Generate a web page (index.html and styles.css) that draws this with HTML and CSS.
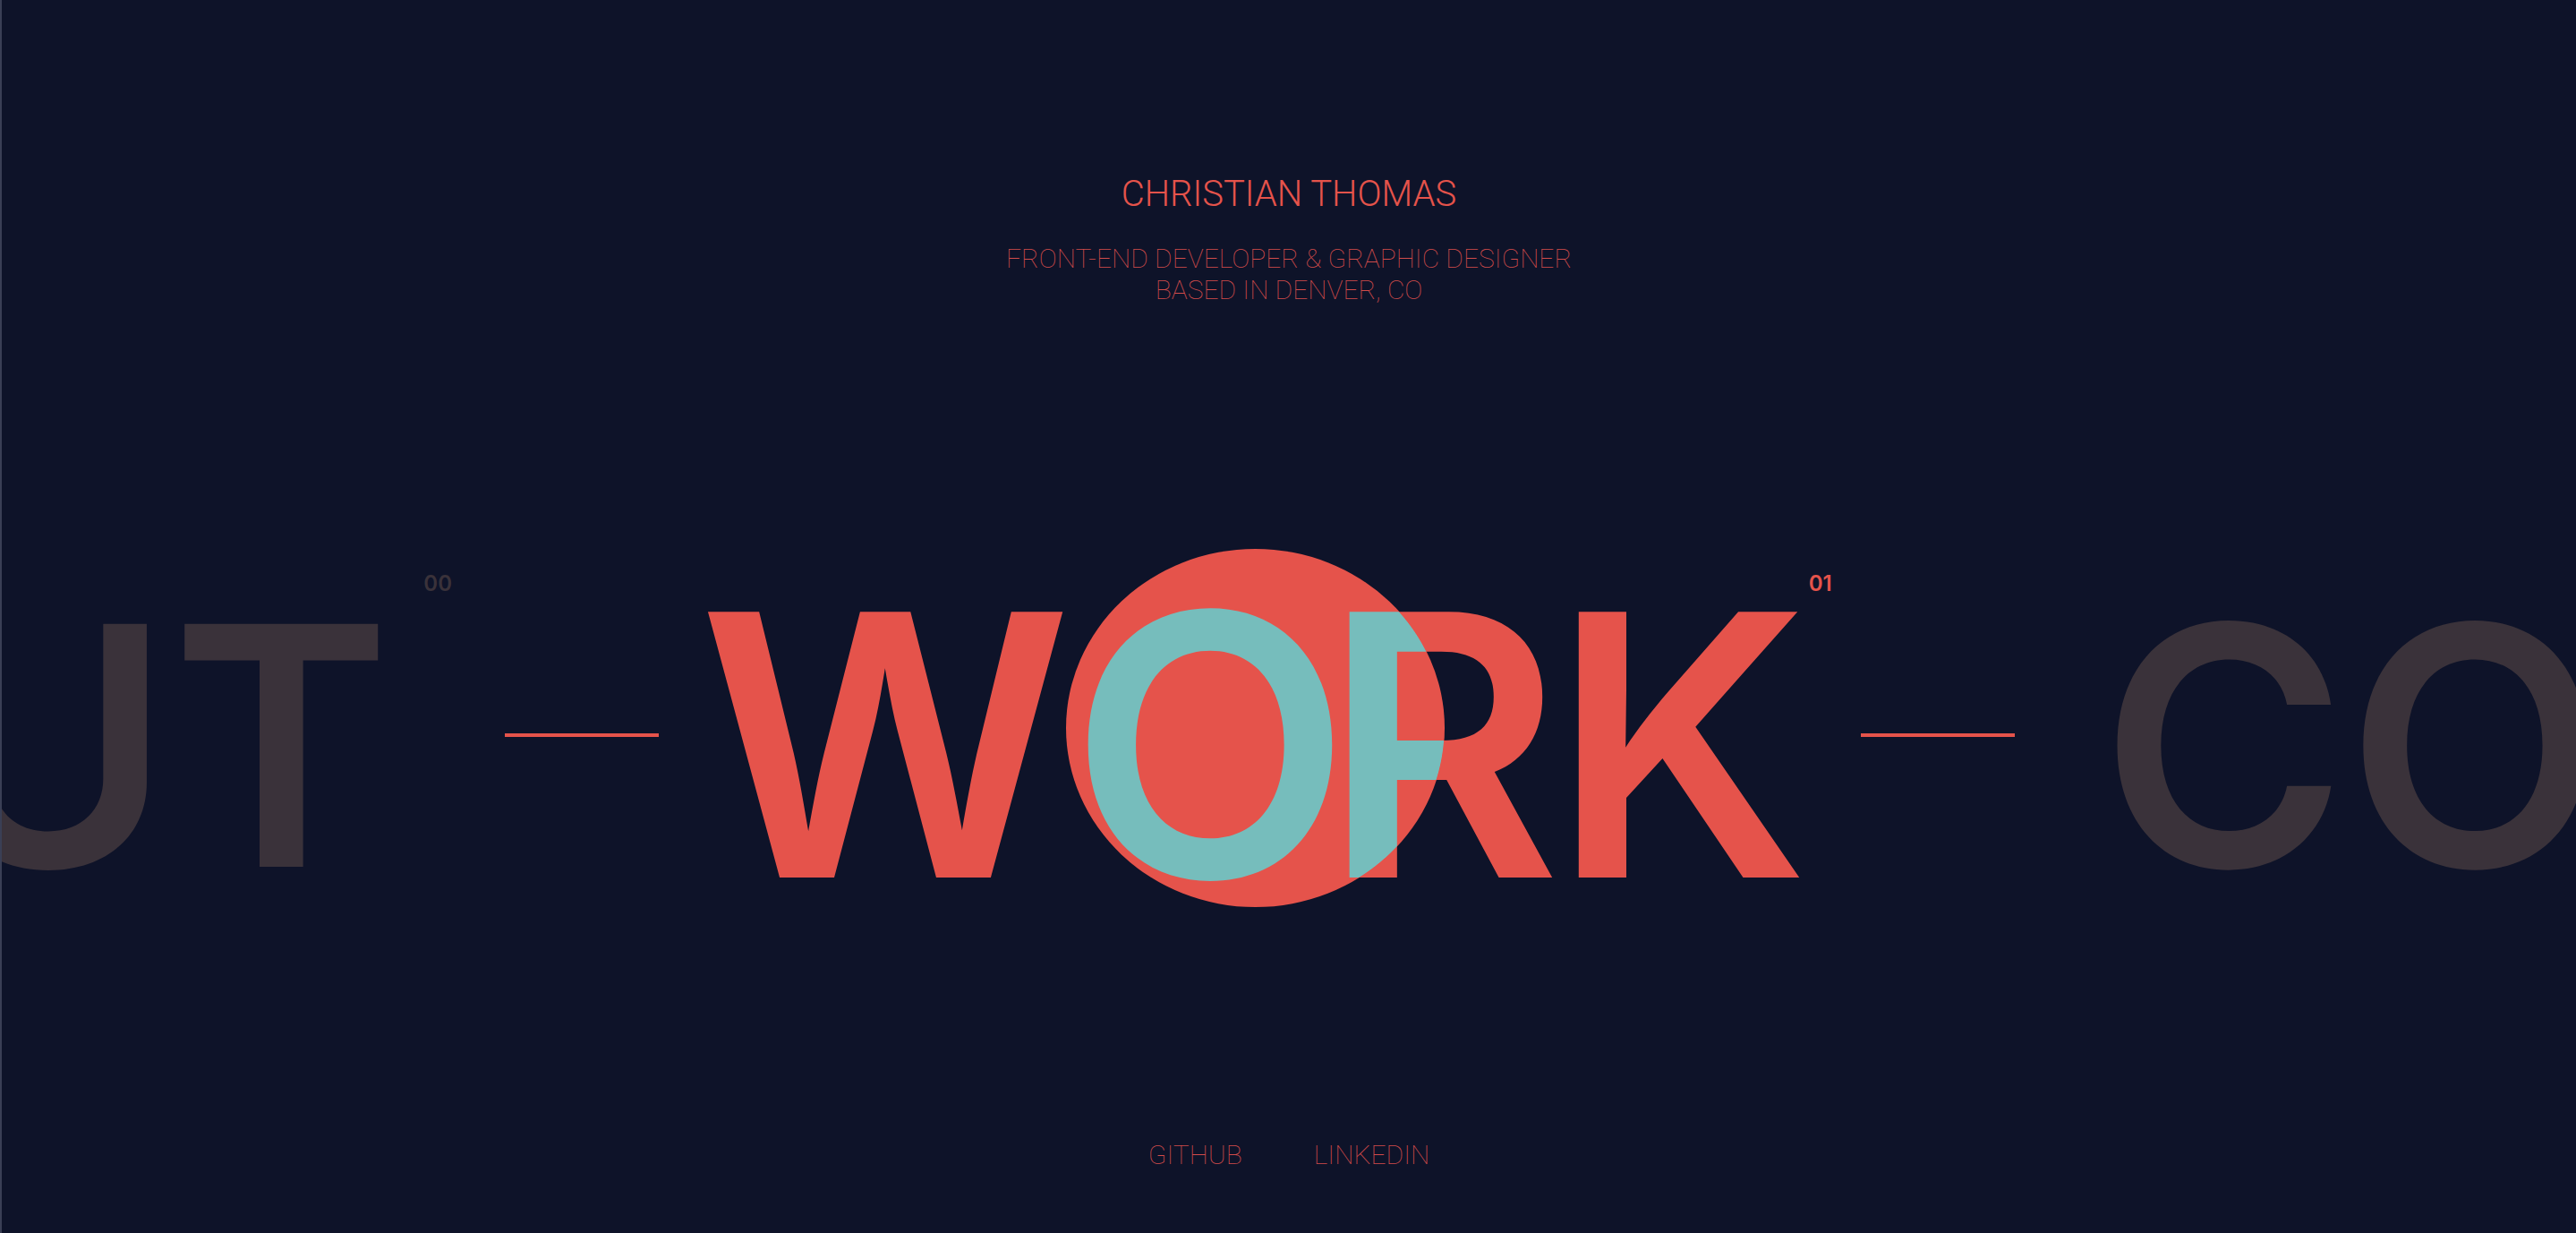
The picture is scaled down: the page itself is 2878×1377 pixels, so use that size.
FILE: index.html
```html
<!DOCTYPE html>
<html lang="en">
<head>
<meta charset="utf-8">
<title>Christian Thomas</title>
<link rel="stylesheet" href="styles.css">
</head>
<body>
<div class="page">
  <header class="intro">
    <h1 class="name">CHRISTIAN THOMAS</h1>
    <p class="tagline">FRONT-END DEVELOPER &amp; GRAPHIC DESIGNER<br>BASED IN DENVER, CO</p>
  </header>

  <nav class="carousel">
    <div class="side side-left">
      <div class="item">
        <span class="word word-dim">ABOUT</span>
        <span class="label label-dim label-about">00</span>
      </div>
      <span class="dash dash-left"></span>
    </div>

    <div class="item item-active">
      <div class="word-wrap">
        <span class="blob"></span>
        <span class="word word-active"><span class="kern-w">W</span><span class="kern-o">O</span><span class="kern-r">R</span>K</span>
      </div>
      <span class="label label-active">01</span>
    </div>

    <div class="side side-right">
      <span class="dash dash-right"></span>
      <div class="item">
        <span class="word word-dim">CONTACT</span>
        <span class="label label-dim">02</span>
      </div>
    </div>
  </nav>

  <footer class="links">
    <a class="link" href="#">GITHUB</a>
    <a class="link" href="#">LINKEDIN</a>
  </footer>
</div>
</body>
</html>
```

FILE: styles.css
```css
* {
  box-sizing: border-box;
}

html, body {
  margin: 0;
  padding: 0;
}

body {
  background: #0e1329;
  width: 2878px;
  height: 1377px;
  overflow: hidden;
  border-left: 2px solid #3a3f55;
}

.page {
  display: flex;
  flex-direction: column;
  align-items: center;
  height: 1377px;
  padding-top: 197px;
}

.intro {
  display: flex;
  flex-direction: column;
  align-items: center;
  text-align: center;
}

.name {
  margin: 0;
  font-family: Roboto, "Liberation Sans", sans-serif;
  font-weight: 300;
  font-size: 40px;
  line-height: 1;
  color: #e5534b;
}

.tagline {
  margin: 34px 0 0;
  font-family: Roboto, "Liberation Sans", sans-serif;
  font-weight: 100;
  font-size: 30px;
  line-height: 35px;
  color: #d24c4b;
}

.carousel {
  margin-top: 287px;
  width: 100%;
  display: grid;
  grid-template-columns: 734px auto 1fr;
  align-items: center;
  height: 408px;
}

.side {
  display: flex;
  align-items: center;
  min-width: 0;
  height: 408px;
}

.side-left {
  justify-content: flex-end;
}

.side-right {
  justify-content: flex-start;
}

.item {
  display: flex;
  align-items: center;
  height: 408px;
  flex: none;
}

.word {
  font-family: Inter, "Liberation Sans", sans-serif;
  font-weight: 600;
  line-height: 1;
  white-space: nowrap;
}

.word-dim {
  font-size: 373px;
  color: #3a323a;
}

.label {
  align-self: flex-start;
  margin-top: 12px;
  font-family: Inter, "Liberation Sans", sans-serif;
  font-weight: 600;
  font-size: 24px;
  line-height: 1;
}

.label-dim {
  color: #3a323a;
  margin-left: 36px;
}

.label-active {
  color: #e5534b;
  margin-left: 0;
}

.dash {
  flex: none;
  width: 172px;
  height: 4px;
  background: #e5534b;
  margin-bottom: 22px;
}

.dash-left {
  margin-left: 59px;
}

.dash-right {
  margin-left: 32px;
  margin-right: 96px;
}

.item-active {
  margin-left: 45px;
}

.word-wrap {
  position: relative;
  display: flex;
}

.blob {
  position: absolute;
  left: 410px;
  top: -15px;
  width: 423px;
  height: 400px;
  border-radius: 50%;
  background: #e5534b;
}

.word-active {
  position: relative;
  font-size: 408px;
  color: transparent;
  background: radial-gradient(211.5px 200px at 621.5px 185px, #76bdbc 99.6%, #e5534b 100%);
  -webkit-background-clip: text;
  background-clip: text;
}

.kern-w {
  letter-spacing: -2px;
}

.kern-o {
  letter-spacing: -31px;
}

.kern-r {
  letter-spacing: -10px;
}

.links {
  margin-top: 239px;
  display: flex;
  gap: 80px;
}

.link {
  font-family: Roboto, "Liberation Sans", sans-serif;
  font-weight: 100;
  font-size: 30px;
  line-height: 1;
  color: #d24c4b;
  text-decoration: none;
}
```
